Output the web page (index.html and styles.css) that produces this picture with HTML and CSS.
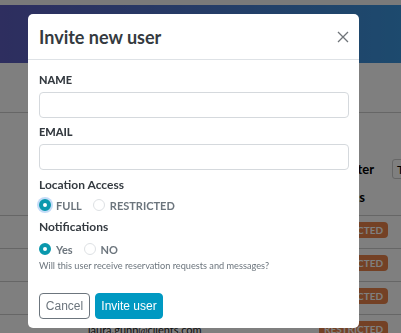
FILE: index.html
```html
<!DOCTYPE html>
<html lang="en">

<head>
  <meta charset="UTF-8">
  <meta name="viewport" content="width=device-width, initial-scale=1.0">
  <title>Invite new user</title>
  <link rel="stylesheet" href="styles.css">
</head>

<body>
  <div class="page">
    <div class="topbar"></div>
    <header class="banner"></header>
    <div class="toolbar"></div>
    <div class="filters">
      <span class="filter-label">Filter</span>
      <span class="filter-box">T</span>
    </div>
    <div class="table-head">
      <span class="col-status">Status</span>
    </div>
    <div class="row"><span class="badge">RESTRICTED</span></div>
    <div class="row"><span class="badge">RESTRICTED</span></div>
    <div class="row"><span class="badge">RESTRICTED</span></div>
    <div class="row"><span class="email">laura.gunn@clients.com</span><span class="badge">RESTRICTED</span></div>
  </div>

  <div class="overlay">
    <div class="modal">
      <div class="modal-header">
        <h2>Invite new user</h2>
        <button class="close-btn" aria-label="Close">
          <svg width="12" height="12" viewBox="0 0 12 12">
            <path d="M1 1 L11 11 M11 1 L1 11" stroke="#6f7479" stroke-width="1.3" fill="none" />
          </svg>
        </button>
      </div>
      <div class="modal-body">
        <label class="field-label">NAME</label>
        <input class="field-input" type="text">
        <label class="field-label">EMAIL</label>
        <input class="field-input" type="email">

        <div class="group-label">Location Access</div>
        <div class="radio-row">
          <label class="radio-opt"><span class="radio checked focused"></span>FULL</label>
          <label class="radio-opt"><span class="radio"></span>RESTRICTED</label>
        </div>

        <div class="group-label">Notifications</div>
        <div class="radio-row notif">
          <label class="radio-opt"><span class="radio checked"></span>Yes</label>
          <label class="radio-opt"><span class="radio"></span>NO</label>
        </div>
        <p class="help">Will this user receive reservation requests and messages?</p>
      </div>
      <div class="modal-footer">
        <button class="btn btn-cancel">Cancel</button>
        <button class="btn btn-primary">Invite user</button>
      </div>
    </div>
  </div>
</body>

</html>
```

FILE: styles.css
```css
* {
  margin: 0;
  padding: 0;
  box-sizing: border-box;
}

body {
  font-family: 'Lato', 'Liberation Sans', sans-serif;
  background: #fff;
  overflow: hidden;
}

.page {
  width: 401px;
  height: 333px;
  background: #fff;
  overflow: hidden;
}

.topbar {
  height: 5px;
  background: #f4f4f4;
}

.banner {
  height: 58px;
  background: linear-gradient(to right, #5c5cbe, #3a94dc);
}

.toolbar {
  height: 50px;
  border-bottom: 1px solid #ccc;
}

.filters {
  display: flex;
  justify-content: flex-end;
  align-items: center;
  gap: 18px;
  height: 40px;
  margin-top: 36px;
}

.filter-label {
  font-weight: bold;
  font-size: 13px;
}

.filter-box {
  width: 30px;
  height: 20px;
  border: 1px solid #ccc;
  border-radius: 3px;
  font-size: 12px;
  padding: 2px 4px;
  margin-right: -21px;
  overflow: hidden;
}

.table-head {
  display: flex;
  justify-content: flex-end;
  height: 27px;
  padding-right: 36px;
  border-bottom: 1px solid #ccc;
  font-weight: bold;
  font-size: 13px;
}

.row {
  position: relative;
  height: 33px;
  border-bottom: 1px solid #ccc;
  display: flex;
  align-items: center;
  justify-content: flex-end;
  padding-right: 13px;
}

.email {
  position: absolute;
  left: 88px;
  top: 8px;
  font-size: 11px;
  color: #222;
}

.badge {
  background: #e8834a;
  color: #fff;
  font-size: 10px;
  font-weight: bold;
  padding: 2px 5px;
  border-radius: 4px;
  margin-top: -4px;
}

.overlay {
  position: fixed;
  inset: 0;
  background: rgba(0, 0, 0, 0.5);
}

.modal {
  margin: 14px 0 0 28px;
  width: 331px;
  height: 314px;
  background: #fff;
  border-radius: 5px;
  display: flex;
  flex-direction: column;
}

.modal-header {
  height: 46px;
  border-bottom: 1px solid #dee2e6;
  display: flex;
  align-items: center;
  justify-content: space-between;
  padding: 0 10px 0 11px;
}

.modal-header h2 {
  font-size: 18px;
  font-weight: bold;
  color: #343a40;
}

.close-btn {
  border: none;
  background: none;
  width: 12px;
  height: 12px;
  display: flex;
}

.modal-body {
  padding: 13px 10px 0 11px;
  display: flex;
  flex-direction: column;
}

.field-label {
  font-size: 11px;
  font-weight: 900;
  color: #343a40;
  line-height: 14px;
  margin-bottom: 5px;
}

.field-input {
  height: 26px;
  border: 1px solid #d5d9dd;
  border-radius: 4px;
  margin-bottom: 7px;
}

.group-label {
  font-size: 12px;
  font-weight: bold;
  color: #343a40;
  line-height: 15px;
}

.radio-row {
  display: flex;
  gap: 11px;
  margin: 6px 0 7px;
  height: 14px;
  align-items: center;
}

.radio-row.notif {
  margin-top: 8px;
  margin-bottom: 4px;
}

.radio-opt {
  display: flex;
  align-items: center;
  gap: 5px;
  font-size: 11px;
  font-weight: bold;
  color: #6c757d;
}

.radio {
  width: 12px;
  height: 12px;
  border-radius: 50%;
  border: 1px solid #dde0e3;
  background: #fff;
}

.radio.checked {
  border: 4px solid #0a98ad;
}

.radio.focused {
  box-shadow: 0 0 0 2px #c4dcf8;
}

.help {
  font-size: 9.2px;
  color: #6c757d;
}

.modal-footer {
  margin-top: auto;
  padding: 0 11px 9px;
  display: flex;
  gap: 5px;
}

.btn {
  height: 26px;
  font-family: 'Liberation Sans', sans-serif;
  font-size: 12px;
  border-radius: 4px;
  white-space: nowrap;
}

.btn-cancel {
  background: #fff;
  border: 1px solid #6c757d;
  color: #6c757d;
  width: 51px;
}

.btn-primary {
  background: #0099c2;
  border: 1px solid #0099c2;
  color: #fff;
  width: 68px;
}
```
